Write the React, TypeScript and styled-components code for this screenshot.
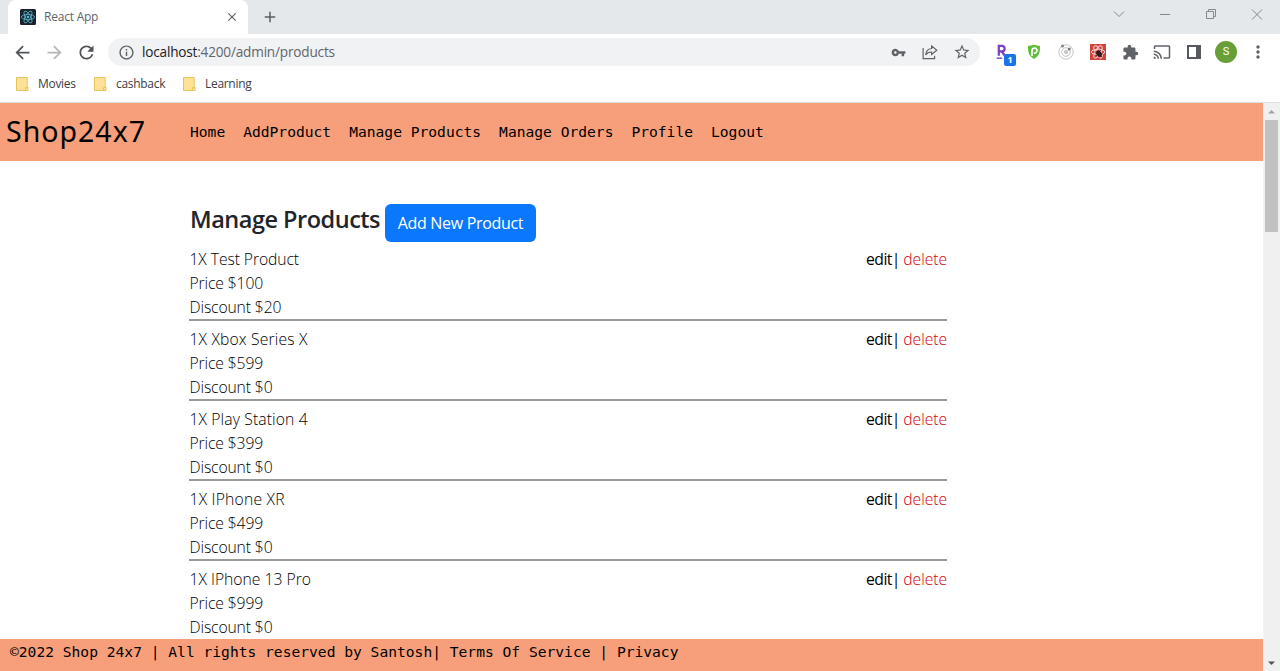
import React from 'react';
import styled, { createGlobalStyle } from 'styled-components';
import { MdArrowBack, MdArrowForward, MdRefresh, MdInfoOutline, MdVpnKey, MdStarBorder, MdExtension, MdCast, MdMoreVert, MdClose, MdAdd } from 'react-icons/md';

const sans = '"Open Sans", "Noto Sans", sans-serif';
const mono = '"DejaVu Sans Mono", monospace';

const GlobalStyle = createGlobalStyle`
  * { box-sizing: border-box; }
  body { margin: 0; overflow: hidden; background: #fff; font-family: ${sans}; }
  svg { display: block; flex: none; }
`;

const Browser = styled.div`
  width: 1280px;
  height: 671px;
  display: flex;
  flex-direction: column;
`;

const TabStrip = styled.header`
  height: 34px;
  flex: none;
  display: flex;
  padding-left: 8px;
  background: #e4e8eb;
`;

const Tab = styled.div`
  width: 240px;
  height: 34px;
  display: flex;
  align-items: center;
  padding: 0 9px 0 12px;
  background: #fff;
  border-radius: 8px 8px 0 0;
  color: #5f6368;
`;

const TabTitle = styled.span`
  flex: 1;
  margin-left: 8px;
  padding-bottom: 1px;
  font-size: 12px;
  letter-spacing: -0.22px;
`;

const NewTab = styled.div`
  display: flex;
  align-items: center;
  margin-left: 13px;
  color: #5a5d61;
  stroke: currentColor;
  stroke-width: 0.5;
`;

const WindowControls = styled.div`
  margin-left: auto;
  height: 28px;
  display: flex;
  align-items: center;
`;

const WindowButton = styled.div`
  width: 46px;
  display: flex;
  justify-content: center;
`;

const Toolbar = styled.div`
  height: 36px;
  flex: none;
  display: flex;
  align-items: center;
  padding: 0 6px;
`;

const IconCell = styled.div<{ $color?: string }>`
  width: 32px;
  height: 28px;
  flex: none;
  display: flex;
  align-items: center;
  justify-content: center;
  position: relative;
  color: ${(p) => p.$color || '#5f6368'};
`;

const AddressBar = styled.div`
  width: 872px;
  height: 28px;
  margin: 0 6px;
  display: flex;
  align-items: center;
  padding: 0 2px 0 10px;
  border-radius: 14px;
  background: #f0f2f4;
  color: #5f6368;
`;

const Url = styled.span`
  flex: 1;
  margin-left: 7px;
  padding-bottom: 1px;
  font-size: 13.6px;
  letter-spacing: -0.19px;
  color: #62666b;
  b { font-weight: 400; color: #202124; }
`;

const CountBadge = styled.span`
  position: absolute;
  left: 18px;
  top: 16px;
  width: 12px;
  height: 12px;
  border-radius: 2px;
  background: #1a73e8;
  color: #fff;
  font: 700 9px/12px ${sans};
  text-align: center;
`;

const Avatar = styled.span`
  width: 22px;
  height: 22px;
  border-radius: 50%;
  background: #689f38;
  color: #fff;
  font: 400 11px/22px Roboto, sans-serif;
  text-align: center;
`;

const Bookmarks = styled.nav`
  height: 33px;
  flex: none;
  display: flex;
  padding: 0 16px 4px;
  border-bottom: 1px solid #dcdedf;
`;

const Bookmark = styled.span<{ $width: number }>`
  width: ${(p) => p.$width}px;
  display: flex;
  align-items: center;
  gap: 9px;
  font-size: 12px;
  letter-spacing: -0.3px;
  color: #3c4043;
`;

const BookmarkName = styled.span`
  padding-bottom: 1px;
`;

const Viewport = styled.div`
  flex: 1;
  min-height: 0;
  display: flex;
`;

const Page = styled.div`
  flex: 1;
  display: flex;
  flex-direction: column;
  min-height: 0;
`;

const Navbar = styled.nav`
  height: 58px;
  flex: none;
  display: flex;
  align-items: center;
  background: #f79f7b;
  color: #000;
`;

const Brand = styled.div`
  width: 190px;
  padding: 0 0 2px 6px;
  font: 400 28.5px/48px "Noto Sans", sans-serif;
  letter-spacing: 1px;
`;

const NavLinks = styled.div`
  display: flex;
  gap: 18px;
  padding-bottom: 2px;
  font-family: ${mono};
  font-size: 14.62px;
  white-space: nowrap;
`;

const Main = styled.main`
  flex: 1;
  min-height: 0;
  overflow: hidden;
  padding: 43px 0 0 190px;
`;

const TitleRow = styled.div`
  height: 43px;
  display: flex;
  align-items: flex-start;
`;

const Title = styled.h4`
  width: 195px;
  margin: 0;
  font-size: 23.5px;
  font-weight: 600;
  line-height: 30px;
  letter-spacing: -0.49px;
  white-space: nowrap;
  color: #212529;
`;

const AddButton = styled.button`
  width: 151px;
  height: 38px;
  padding: 0;
  border: 0;
  border-radius: 6px;
  background: #0a77fd;
  color: #fff;
  font: 400 16px/38px ${sans};
  letter-spacing: -0.32px;
  white-space: nowrap;
`;

const Product = styled.section`
  width: 757px;
  height: 80px;
  display: flex;
  justify-content: space-between;
  font-size: 15.7px;
  line-height: 24px;
  color: #000;
`;

const ProductList = styled.div`
  display: flex;
  flex-direction: column;
`;

const Divider = styled.div`
  width: 758px;
  height: 2px;
  margin: -8px 0 6px -1px;
  background: #999;
`;

const Details = styled.div`
  margin-left: -0.5px;
  font-weight: 300;
  letter-spacing: -0.12px;
`;

const ProductName = styled.div<{ $tracking: number }>`
  letter-spacing: ${(p) => p.$tracking}px;
`;

const Actions = styled.div`
  color: #000;
  font-weight: 300;
  letter-spacing: -0.2px;
  word-spacing: -0.5px;
`;

const Edit = styled.span`
  font-weight: 400;
  letter-spacing: -0.55px;
`;

const Delete = styled.span`
  color: #d00008;
  letter-spacing: -0.05px;
`;

const Footer = styled.footer`
  height: 32px;
  flex: none;
  padding-left: 10px;
  background: #f79f7b;
  color: #000;
  font: 14.62px/25px ${mono};
  white-space: pre;
`;

const Scrollbar = styled.div`
  width: 17px;
  display: flex;
  flex-direction: column;
  align-items: center;
  justify-content: space-between;
  padding: 6px 0 5px;
  background: #f0f0f0;
`;

const Thumb = styled.div`
  width: 13px;
  height: 112px;
  margin: 6px 0 auto;
  background: #c1c1c1;
`;

const ReactLogo = () => (
  <svg width="16" height="16" viewBox="0 0 16 16">
    <rect width="16" height="16" rx="1.5" fill="#1b2229" />
    <g fill="none" stroke="#58b9d3" strokeWidth=".8">
      <ellipse cx="8" cy="8" rx="6.6" ry="2.6" />
      <ellipse cx="8" cy="8" rx="6.6" ry="2.6" transform="rotate(60 8 8)" />
      <ellipse cx="8" cy="8" rx="6.6" ry="2.6" transform="rotate(120 8 8)" />
    </g>
    <circle cx="8" cy="8" r="1.3" fill="#58b9d3" />
  </svg>
);

const FolderIcon = () => (
  <svg width="13" height="14" viewBox="0 0 13 14">
    <path d="M.5.5h10.7v9.4h.8v3.6H.5z" fill="#ffe296" stroke="#e6c35c" />
    <path d="M9.6 13V10.5h1.6" fill="none" stroke="#e6c35c" />
  </svg>
);

const ShareIcon = () => (
  <svg width="16" height="16" viewBox="0 0 16 16" fill="none" stroke="#5f6368" strokeWidth="1.2">
    <path d="M1.1 4v10.7h11.5v-2.9M9.6 1.9l5.2 4.3-5.2 4.3V8C6.7 7.9 5 8.9 3.7 11c.3-3.7 2.4-6.1 5.9-6.5z" />
  </svg>
);

const RakutenIcon = () => (
  <svg width="12" height="16" viewBox="0 0 12 16" fill="none" stroke="#7b3fc2" strokeWidth="2.2">
    <path d="M2.8 11.8V1.8h3.1a2.8 2.8 0 0 1 0 5.6H2.8M5.5 7.3l3.5 4.5" />
    <path d="M.7 14.2h5.5" strokeWidth="1.4" />
  </svg>
);

const ShieldIcon = () => (
  <svg width="14" height="16" viewBox="0 0 14 16">
    <path d="M7 .8 13 2c.2 6.2-.8 10-6 13C1.8 12 .8 8.2 1 2z" fill="#61bd3b" />
    <path d="M5 12V6.5A2.5 2.5 0 1 1 7 9" fill="none" stroke="#fff" strokeWidth="1.7" />
  </svg>
);

const OrbitIcon = () => (
  <svg width="16" height="16" viewBox="0 0 16 16" fill="none" stroke="#c4c5c7">
    <circle cx="8" cy="8" r="7.2" />
    <circle cx="8" cy="8" r="4.3" />
    <circle cx="8" cy="8" r="1.7" fill="#ccc" />
    <circle cx="4.5" cy="2" r="1.6" fill="#888" stroke="none" />
    <circle cx="11.2" cy="5" r="1.5" fill="#777" stroke="none" />
  </svg>
);

const ReactDevIcon = () => (
  <svg width="16" height="16" viewBox="0 0 16 16">
    <path fill="#d0443e" d="M0 0h16v16H0z" />
    <g fill="none" stroke="#f9d5d2" strokeWidth="1">
      <ellipse cx="8" cy="8" rx="6.8" ry="2.6" />
      <ellipse cx="8" cy="8" rx="6.8" ry="2.6" transform="rotate(60 8 8)" />
      <ellipse cx="8" cy="8" rx="6.8" ry="2.6" transform="rotate(120 8 8)" />
    </g>
    <ellipse cx="9" cy="9.7" rx="2.5" ry="3.3" fill="#38191a" transform="rotate(-35 9 9.7)" />
    <path d="M4.5 7.5 12.5 13M6 12l5-6M5.5 9.5h7M9 5.5v8" stroke="#38191a" strokeWidth=".8" />
  </svg>
);

const SidePanelIcon = () => (
  <svg width="14" height="14" viewBox="0 0 14 14">
    <path d="M1 1h12v12H1z" fill="none" stroke="#56595d" strokeWidth="2" />
    <path d="M9 1h4v12H9z" fill="#56595d" />
  </svg>
);

const windowGlyphs = [
  'M1 3.5l5 5 5-5',
  'M1 6.5h10',
  'M1.5 3.5h7v7h-7zM3.5 3.5v-2h7v7h-2',
  'M1 1.5l10 10M11 1.5l-10 10',
];

const products = [
  { name: 'Test Product', price: 100, discount: 20, tracking: -0.08 },
  { name: 'Xbox Series X', price: 599, discount: 0, tracking: 0.15 },
  { name: 'Play Station 4', price: 399, discount: 0, tracking: 0.12 },
  { name: 'IPhone XR', price: 499, discount: 0, tracking: 0.2 },
  { name: 'IPhone 13 Pro', price: 999, discount: 0, tracking: 0 },
];

const links = ['Home', 'AddProduct', 'Manage Products', 'Manage Orders', 'Profile', 'Logout'];

export default function App() {
  return (
    <Browser>
      <GlobalStyle />
      <TabStrip>
        <Tab>
          <ReactLogo />
          <TabTitle>React App</TabTitle>
          <MdClose size={14} />
        </Tab>
        <NewTab><MdAdd size={18} /></NewTab>
        <WindowControls>
          {windowGlyphs.map((d) => (
            <WindowButton key={d}>
              <svg width="12" height="12" viewBox="0 0 12 12" fill="none" stroke="#85888c"><path d={d} /></svg>
            </WindowButton>
          ))}
        </WindowControls>
      </TabStrip>
      <Toolbar>
        <IconCell $color="#505357"><MdArrowBack size={21} /></IconCell>
        <IconCell $color="#b5b7b9"><MdArrowForward size={21} /></IconCell>
        <IconCell $color="#505357"><MdRefresh size={21} /></IconCell>
        <AddressBar>
          <MdInfoOutline size={17} />
          <Url><b>localhost</b>:4200/admin/products</Url>
          <IconCell><MdVpnKey size={15} /></IconCell>
          <IconCell><ShareIcon /></IconCell>
          <IconCell><MdStarBorder size={18} /></IconCell>
        </AddressBar>
        <IconCell><RakutenIcon /><CountBadge>1</CountBadge></IconCell>
        <IconCell><ShieldIcon /></IconCell>
        <IconCell><OrbitIcon /></IconCell>
        <IconCell><ReactDevIcon /></IconCell>
        <IconCell><MdExtension size={17} /></IconCell>
        <IconCell><MdCast size={18} /></IconCell>
        <IconCell><SidePanelIcon /></IconCell>
        <IconCell><Avatar>S</Avatar></IconCell>
        <IconCell><MdMoreVert size={20} /></IconCell>
      </Toolbar>
      <Bookmarks>
        <Bookmark $width={78}><FolderIcon /><BookmarkName>Movies</BookmarkName></Bookmark>
        <Bookmark $width={89}><FolderIcon /><BookmarkName>cashback</BookmarkName></Bookmark>
        <Bookmark $width={80}><FolderIcon /><BookmarkName>Learning</BookmarkName></Bookmark>
      </Bookmarks>
      <Viewport>
        <Page>
          <Navbar>
            <Brand>Shop24x7</Brand>
            <NavLinks>{links.map((l) => <span key={l}>{l}</span>)}</NavLinks>
          </Navbar>
          <Main>
            <TitleRow>
              <Title>Manage Products</Title>
              <AddButton>Add New Product</AddButton>
            </TitleRow>
            <ProductList>
              {products.map((p) => (
                <React.Fragment key={p.name}>
                  <Product>
                    <Details>
                      <ProductName $tracking={p.tracking}>1X {p.name}</ProductName>
                      <div>Price ${p.price}</div>
                      <div>Discount ${p.discount}</div>
                    </Details>
                    <Actions><Edit>edit|</Edit> <Delete>delete</Delete></Actions>
                  </Product>
                  <Divider />
                </React.Fragment>
              ))}
            </ProductList>
          </Main>
          <Footer>©2022 Shop 24x7 | All rights reserved by Santosh| Terms Of Service | Privacy</Footer>
        </Page>
        <Scrollbar>
          <svg width="7" height="5" viewBox="0 0 7 5"><path d="M0 4.5 3.5 1 7 4.5z" fill="#a3a3a3" /></svg>
          <Thumb />
          <svg width="7" height="5" viewBox="0 0 7 5"><path d="M0 .5 3.5 4 7 .5z" fill="#505050" /></svg>
        </Scrollbar>
      </Viewport>
    </Browser>
  );
}
